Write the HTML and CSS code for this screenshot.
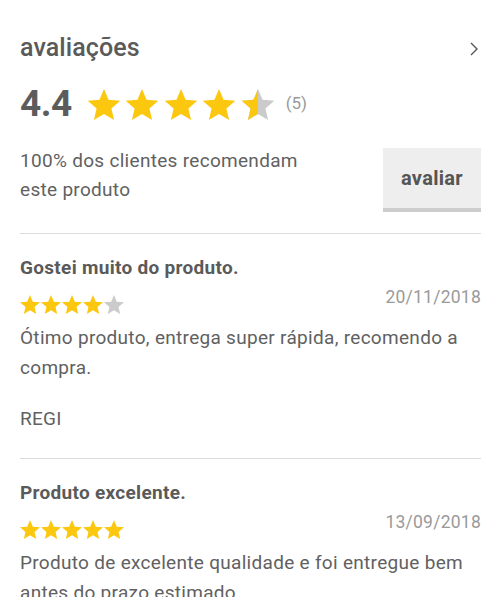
FILE: index.html
```html
<!DOCTYPE html>
<html lang="pt">
<head>
<meta charset="utf-8">
<link rel="stylesheet" href="styles.css">
</head>
<body>
<svg class="defs" width="0" height="0" aria-hidden="true">
  <defs>
    <path id="star" d="M12 17.27L18.18 21l-1.64-7.03L22 9.24l-7.19-.61L12 2 9.19 8.63 2 9.24l5.46 4.73L5.82 21z"/>
    <clipPath id="half"><rect x="0" y="0" width="12" height="24"/></clipPath>
  </defs>
</svg>
<main class="page">
  <header class="head">
    <h1 class="title">avaliações</h1>
    <svg class="chev" viewBox="0 0 10 16" width="10" height="16"><path d="M2 2l6 6-6 6" fill="none" stroke="#555" stroke-width="1.4"/></svg>
  </header>

  <div class="score">
    <span class="avg">4.4</span>
    <div class="stars big">
      <svg viewBox="2 2 20 19"><use href="#star" class="on"/></svg>
      <svg viewBox="2 2 20 19"><use href="#star" class="on"/></svg>
      <svg viewBox="2 2 20 19"><use href="#star" class="on"/></svg>
      <svg viewBox="2 2 20 19"><use href="#star" class="on"/></svg>
      <svg viewBox="2 2 20 19"><use href="#star" class="off"/><use href="#star" class="on" clip-path="url(#half)"/></svg>
    </div>
    <span class="count">(5)</span>
  </div>

  <div class="recommend">
    <p class="rec-text">100% dos clientes recomendam<br>este produto</p>
    <button class="btn">avaliar</button>
  </div>

  <section class="review">
    <h2 class="r-title">Gostei muito do produto.</h2>
    <div class="r-meta">
      <div class="stars small">
        <svg viewBox="2 2 20 19"><use href="#star" class="on"/></svg>
        <svg viewBox="2 2 20 19"><use href="#star" class="on"/></svg>
        <svg viewBox="2 2 20 19"><use href="#star" class="on"/></svg>
        <svg viewBox="2 2 20 19"><use href="#star" class="on"/></svg>
        <svg viewBox="2 2 20 19"><use href="#star" class="off"/></svg>
      </div>
      <span class="date">20/11/2018</span>
    </div>
    <p class="r-body">Ótimo produto, entrega super rápida, recomendo a compra.</p>
    <p class="r-author">REGI</p>
  </section>

  <section class="review">
    <h2 class="r-title">Produto excelente.</h2>
    <div class="r-meta">
      <div class="stars small">
        <svg viewBox="2 2 20 19"><use href="#star" class="on"/></svg>
        <svg viewBox="2 2 20 19"><use href="#star" class="on"/></svg>
        <svg viewBox="2 2 20 19"><use href="#star" class="on"/></svg>
        <svg viewBox="2 2 20 19"><use href="#star" class="on"/></svg>
        <svg viewBox="2 2 20 19"><use href="#star" class="on"/></svg>
      </div>
      <span class="date">13/09/2018</span>
    </div>
    <p class="r-body">Produto de excelente qualidade e foi entregue bem antes do prazo estimado.</p>
  </section>
</main>
</body>
</html>
```

FILE: styles.css
```css
* { box-sizing: border-box; }
html, body { margin: 0; padding: 0; background: #fff; }
body {
  font-family: Roboto, "Liberation Sans", sans-serif;
  color: #5a5a5a;
  width: 500px;
  height: 597px;
  overflow: hidden;
}
.defs { position: absolute; width: 0; height: 0; }
.page { padding: 0 19px 0 20px; }

.head {
  display: flex;
  justify-content: space-between;
  align-items: center;
  height: 36px;
  margin-top: 30px;
}
.title {
  margin: 0;
  font-size: 25px;
  font-weight: 500;
  line-height: 36px;
  letter-spacing: 0.1px;
  color: #5a5a5a;
}
.chev { margin-right: 2px; margin-top: 2px; }

.score {
  display: flex;
  align-items: center;
  height: 44px;
  margin-top: 16px;
}
.avg {
  font-size: 37px;
  font-weight: 700;
  line-height: 44px;
  color: #5c5c5c;
  letter-spacing: -0.5px;
}
.stars { display: flex; }
.stars svg { display: block; }
.big { margin-left: 15px; gap: 4.5px; }
.big svg { width: 34px; height: 31px; }
.small { gap: 1px; }
.small svg { width: 20px; height: 19px; }
.on { fill: #fbc80f; }
.off { fill: #cbcbcb; }
.count {
  margin-left: 11px;
  margin-top: -2px;
  font-size: 17px;
  color: #9a9a9a;
}

.recommend {
  display: flex;
  justify-content: space-between;
  align-items: flex-start;
  margin-top: 22px;
  padding-bottom: 21px;
  border-bottom: 1px solid #dcdcdc;
}
.rec-text {
  margin: 0;
  margin-top: -2px;
  font-size: 19px;
  line-height: 29px;
  letter-spacing: 0.3px;
  color: #616161;
}
.btn {
  width: 98px;
  height: 64px;
  border: none;
  border-bottom: 4px solid #cdcdcd;
  background: #eeeeee;
  font-family: Roboto, "Liberation Sans", sans-serif;
  font-size: 20px;
  font-weight: 700;
  letter-spacing: 0.3px;
  color: #555;
  padding: 0;
}

.review {
  padding: 22px 0 24px;
  border-bottom: 1px solid #dcdcdc;
}
.r-title {
  margin: 0;
  font-size: 19px;
  font-weight: 700;
  line-height: 24px;
  letter-spacing: 0.3px;
  color: #5a5a5a;
}
.r-meta {
  display: flex;
  justify-content: space-between;
  align-items: flex-start;
  margin-top: 15px;
  height: 23px;
}
.date {
  font-size: 17.5px;
  line-height: 16px;
  letter-spacing: 0.25px;
  color: #9a9a9a;
  margin-top: -6px;
}
.r-body {
  margin: 5px 0 0;
  font-size: 19px;
  line-height: 30px;
  letter-spacing: 0.3px;
  color: #616161;
}
.r-author {
  margin: 21px 0 0;
  font-size: 19px;
  line-height: 30px;
  letter-spacing: 0.3px;
  color: #616161;
}
```
